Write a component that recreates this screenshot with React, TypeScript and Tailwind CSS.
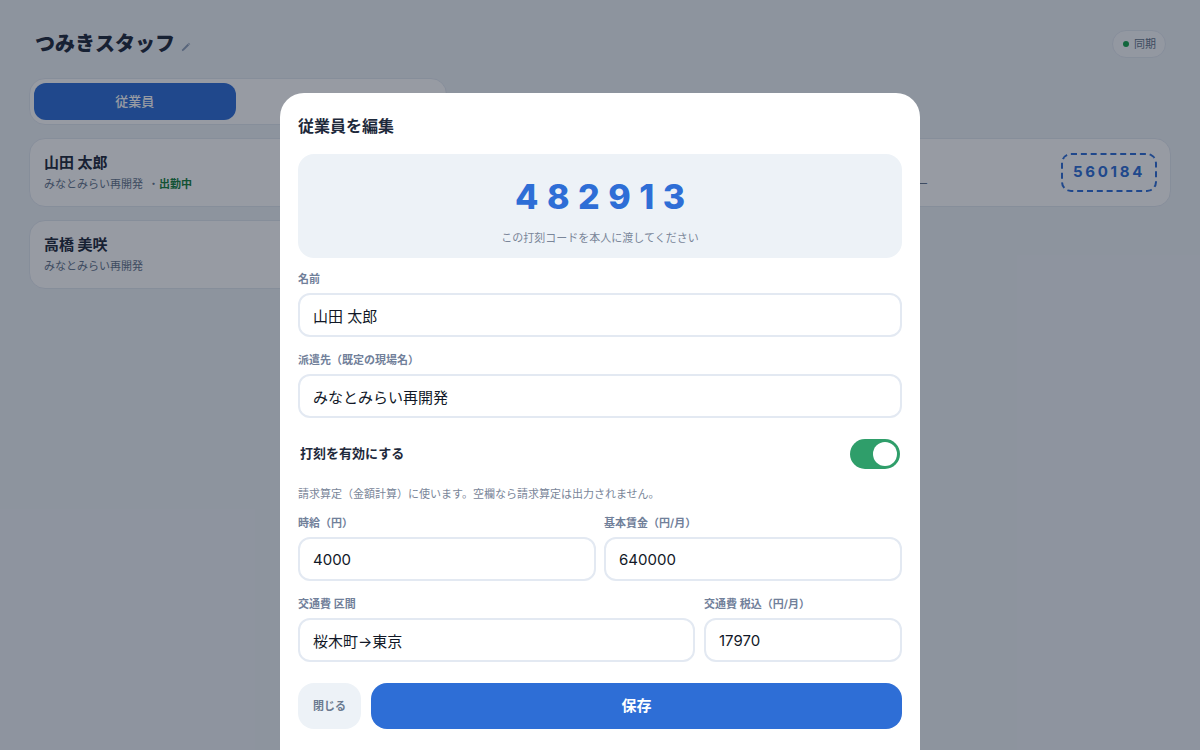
import { useState } from 'react';

const font = { fontFamily: 'Inter, "Noto Sans CJK JP", "Noto Sans", sans-serif' };

function PencilGlyph() {
  return (
    <svg width="11" height="11" viewBox="0 0 12 12" className="mt-[6px] text-slate-400">
      <path d="M2 10 L2.6 7.8 L8.4 2 L10 3.6 L4.2 9.4 Z" fill="currentColor" />
      <path d="M8.9 1.5 L9.6 0.8 L11.2 2.4 L10.5 3.1 Z" fill="currentColor" />
    </svg>
  );
}

function Field({ label, value }: { label: string; value: string }) {
  return (
    <label className="block">
      <span className="block text-[11px] font-semibold leading-[14px] text-[#71809a]">{label}</span>
      <input
        readOnly
        value={value}
        className="mt-[7px] h-[44px] w-full rounded-xl border-2 border-[#e3e9f2] bg-white px-[13px] text-[15px] text-[#111827] outline-none"
      />
    </label>
  );
}

export default function App() {
  const [enabled, setEnabled] = useState(true);

  return (
    <div className="relative h-[750px] w-[1200px] overflow-hidden bg-[#eef2f7]" style={font}>
      {/* page underneath */}
      <div className="px-[29px] pt-[30px]">
        <header className="flex items-center justify-between">
          <div className="ml-[6px] flex items-center gap-[5px]">
            <h1 className="text-[20px] font-extrabold leading-[28px] text-[#1e293b]">つみきスタッフ</h1>
            <PencilGlyph />
          </div>
          <div className="mr-[5px] flex h-[28px] items-center gap-[5px] rounded-full border border-[#e2e8f0] bg-[#f8fafc] pl-[10px] pr-[9px] text-[11px] text-[#64748b]">
            <span className="h-[6px] w-[6px] rounded-full bg-[#16a34a]" />
            同期
          </div>
        </header>

        <nav className="mt-[20px] flex w-[418px] gap-[5px] rounded-2xl border border-[#e2e8f0] bg-white p-[4px]">
          <button className="h-[37px] flex-1 rounded-xl bg-[#2e6ed6] text-[13px] font-medium text-white">従業員</button>
          <button className="h-[37px] flex-1 rounded-xl text-[13px] font-medium text-[#64748b]">現場</button>
        </nav>

        <main className="mt-[13px] flex flex-col gap-[13px]">
          <article className="flex h-[69px] items-center rounded-2xl border border-[#e2e8f0] bg-white pl-[14px] pr-[13px]">
            <div>
              <h2 className="text-[15px] font-bold leading-[20px] text-[#1e293b]">山田 太郎</h2>
              <p className="mt-[3px] text-[11px] leading-[16px] text-[#64748b]">
                みなとみらい再開発 <span className="ml-[2px]">・</span>
                <span className="font-bold text-[#15803d]">出勤中</span>
              </p>
            </div>
            <div className="ml-auto mr-[134px] pt-[22px] text-[11px] text-[#64748b]">最終打刻 08:12 —</div>
            <div className="rounded-[10px] border-2 border-dashed border-[#2e6ed6] px-[10px] py-[6px] text-[15px] font-bold tracking-[0.18em] text-[#2e6ed6]">
              560184
            </div>
          </article>
          <article className="flex h-[69px] w-[820px] items-center rounded-2xl border border-[#e2e8f0] bg-white pl-[14px]">
            <div>
              <h2 className="text-[15px] font-bold leading-[20px] text-[#1e293b]">高橋 美咲</h2>
              <p className="mt-[3px] text-[11px] leading-[16px] text-[#64748b]">みなとみらい再開発</p>
            </div>
          </article>
        </main>
      </div>

      {/* overlay + modal */}
      <div className="absolute inset-0 flex justify-center bg-[rgba(15,23,42,0.43)] pt-[93px]">
        <section className="h-[720px] w-[640px] rounded-t-[24px] bg-white px-[18px] pt-[22px]">
          <h2 className="text-[16px] font-bold leading-[22px] text-[#1e293b]">従業員を編集</h2>

          <div className="mt-[17px] flex h-[104px] flex-col items-center rounded-2xl bg-[#edf2f7] pt-[23px]">
            <div className="pl-[0.25em] text-[34px] font-extrabold leading-[40px] tracking-[0.25em] text-[#2e6ed6]">482913</div>
            <p className="mt-[14px] text-[11px] leading-[14px] text-[#7a8699]">この打刻コードを本人に渡してください</p>
          </div>

          <div className="mt-[14px]">
            <Field label="名前" value="山田 太郎" />
          </div>
          <div className="mt-[16px]">
            <Field label="派遣先（既定の現場名）" value="みなとみらい再開発" />
          </div>

          <div className="mt-[21px] flex items-center justify-between pl-[2px] pr-[2px]">
            <span className="text-[13px] font-bold text-[#1e293b]">打刻を有効にする</span>
            <button
              onClick={() => setEnabled(!enabled)}
              className={`flex h-[30px] w-[50px] items-center rounded-full p-[3px] ${enabled ? 'justify-end bg-[#2f9e6a]' : 'justify-start bg-[#cbd5e1]'}`}
            >
              <span className="h-[24px] w-[24px] rounded-full bg-white" />
            </button>
          </div>

          <p className="mt-[18px] text-[11px] leading-[14px] text-[#7a8699]">
            請求算定（金額計算）に使います。空欄なら請求算定は出力されません。
          </p>

          <div className="mt-[15px] grid grid-cols-2 gap-[8px]">
            <Field label="時給（円）" value="4000" />
            <Field label="基本賃金（円/月）" value="640000" />
          </div>

          <div className="mt-[16px] grid grid-cols-[397px_1fr] gap-[9px]">
            <Field label="交通費 区間" value="桜木町→東京" />
            <Field label="交通費 税込（円/月）" value="17970" />
          </div>

          <div className="mt-[21px] flex gap-[10px]">
            <button className="h-[46px] w-[63px] rounded-2xl bg-[#edf2f7] text-[11px] font-semibold text-[#6b7a90]">閉じる</button>
            <button className="h-[46px] flex-1 rounded-2xl bg-[#2e6ed6] text-[15px] font-bold text-white">保存</button>
          </div>
        </section>
      </div>
    </div>
  );
}
